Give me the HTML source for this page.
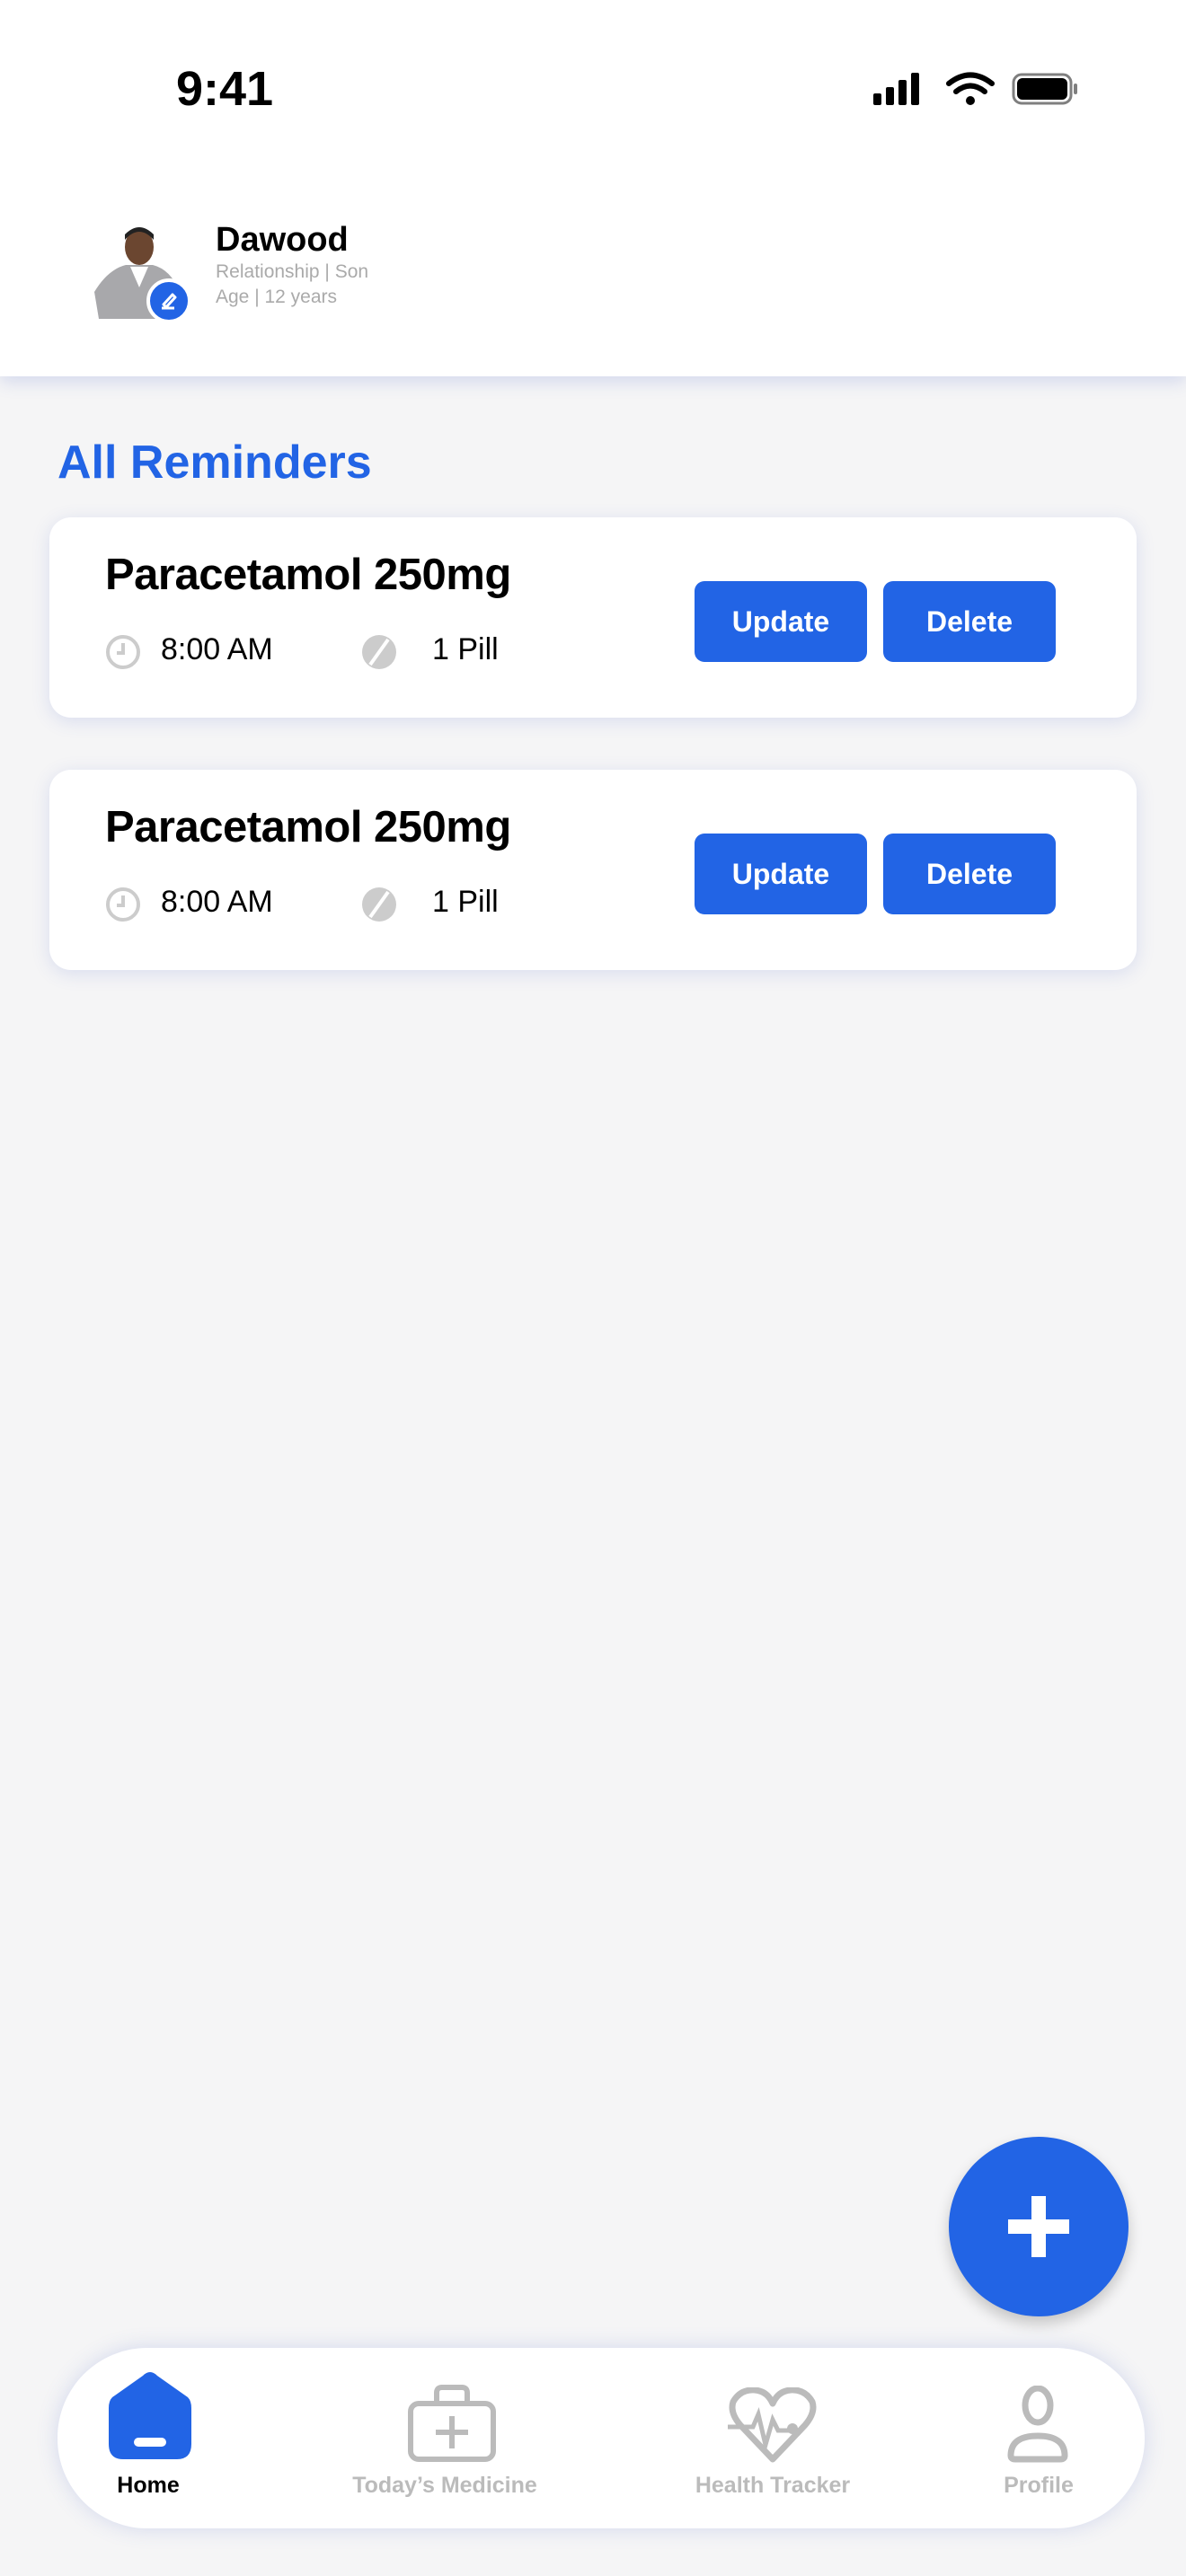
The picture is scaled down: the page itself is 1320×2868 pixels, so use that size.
<!DOCTYPE html>
<html><head><meta charset="utf-8"><style>
*{margin:0;padding:0;box-sizing:border-box}
body{width:1320px;height:2868px;background:#f5f5f6;font-family:"Liberation Sans",sans-serif;position:relative;overflow:hidden}
.abs{position:absolute}
.header{left:0;top:0;width:1320px;height:419px;background:#fff;box-shadow:0 6px 18px rgba(60,90,200,0.18)}
.card{left:55px;width:1210px;height:223px;background:#fff;border-radius:24px;box-shadow:0 4px 20px rgba(60,90,200,0.15)}
.title{left:62px;top:36px;font-size:49px;font-weight:700;color:#000;letter-spacing:-0.5px}
.row{top:128px;font-size:34px;color:#000}
.btn{top:71px;width:192px;height:90px;background:#2264e5;border-radius:11px;color:#fff;font-size:32px;font-weight:700;display:flex;align-items:center;justify-content:center}
.nl{font-size:25px;font-weight:700;color:#bbb;text-align:center;width:300px}
</style></head><body>
<div class="abs header"></div>
<div class="abs" style="left:196px;top:68px;font-size:54px;font-weight:700;color:#000">9:41</div>
<svg class="abs" style="left:970px;top:78px" width="240" height="42" viewBox="0 0 240 42">
<rect x="2" y="26" width="9" height="13" rx="2" fill="#000"/><rect x="16" y="19" width="9" height="20" rx="2" fill="#000"/><rect x="30" y="11" width="9" height="28" rx="2" fill="#000"/><rect x="44" y="3" width="9" height="36" rx="2" fill="#000"/>
<path d="M86 15 Q110 -4 134 15" stroke="#000" stroke-width="6" fill="none" stroke-linecap="round"/><path d="M94 24 Q110 11 126 24" stroke="#000" stroke-width="6" fill="none" stroke-linecap="round"/><circle cx="110" cy="34" r="5" fill="#000"/>
<rect x="158" y="5" width="64" height="32" rx="9" fill="none" stroke="#000" stroke-width="3" opacity="0.5"/><rect x="162" y="9" width="56" height="24" rx="6" fill="#000"/><rect x="225" y="15" width="4" height="12" rx="2" fill="#000" opacity="0.5"/>
</svg>
<svg class="abs" style="left:100px;top:245px" width="115" height="115" viewBox="0 0 115 115">
<circle cx="55" cy="57" r="52" fill="#fff"/>
<path d="M5 80 Q20 55 40 50 L70 50 Q90 55 100 80 L100 110 L10 110 Z" fill="#a8a8ab"/>
<path d="M45 52 L55 75 L65 52 Z" fill="#fff"/>
<ellipse cx="55" cy="30" rx="16" ry="20" fill="#6b4630"/><path d="M39 22 Q55 4 71 22 L71 16 Q55 0 39 16Z" fill="#222"/>
<circle cx="88" cy="90" r="23" fill="#2264e5" stroke="#fff" stroke-width="4"/>
<path d="M80 98 L94 98 M82 94 L92 83 L95 86 L85 97 Z" stroke="#fff" stroke-width="3" fill="none" stroke-linejoin="round"/>
</svg>
<div class="abs" style="left:240px;top:246px;font-size:38px;font-weight:700">Dawood</div>
<div class="abs" style="left:240px;top:291px;font-size:21px;color:#aaa">Relationship | Son</div>
<div class="abs" style="left:240px;top:319px;font-size:21px;color:#aaa">Age | 12 years</div>
<div class="abs" style="left:64px;top:485px;font-size:52px;font-weight:700;color:#2264e5">All Reminders</div>

<div class="abs card" style="top:576px">
<div class="abs title">Paracetamol 250mg</div>
<svg class="abs" style="left:62px;top:130px" width="40" height="40" viewBox="0 0 40 40"><circle cx="20" cy="20" r="17" fill="none" stroke="#ccc" stroke-width="4"/><path d="M20 10 V21 H13" stroke="#ccc" stroke-width="4" fill="none"/></svg>
<div class="abs row" style="left:124px">8:00 AM</div>
<svg class="abs" style="left:347px;top:130px" width="40" height="40" viewBox="0 0 40 40"><circle cx="20" cy="20" r="19" fill="#ccc"/><path d="M30 6 L10 34" stroke="#fff" stroke-width="4"/></svg>
<div class="abs row" style="left:426px">1 Pill</div>
<div class="abs btn" style="left:718px">Update</div>
<div class="abs btn" style="left:928px">Delete</div>
</div>
<div class="abs card" style="top:857px">
<div class="abs title">Paracetamol 250mg</div>
<svg class="abs" style="left:62px;top:130px" width="40" height="40" viewBox="0 0 40 40"><circle cx="20" cy="20" r="17" fill="none" stroke="#ccc" stroke-width="4"/><path d="M20 10 V21 H13" stroke="#ccc" stroke-width="4" fill="none"/></svg>
<div class="abs row" style="left:124px">8:00 AM</div>
<svg class="abs" style="left:347px;top:130px" width="40" height="40" viewBox="0 0 40 40"><circle cx="20" cy="20" r="19" fill="#ccc"/><path d="M30 6 L10 34" stroke="#fff" stroke-width="4"/></svg>
<div class="abs row" style="left:426px">1 Pill</div>
<div class="abs btn" style="left:718px">Update</div>
<div class="abs btn" style="left:928px">Delete</div>
</div>

<div class="abs" style="left:1056px;top:2379px;width:200px;height:200px;border-radius:50%;background:#2264e5;box-shadow:0 8px 16px rgba(0,0,0,0.2)"></div>
<div class="abs" style="left:1122px;top:2445px;width:68px;height:68px">
<div class="abs" style="left:26px;top:0;width:16px;height:68px;background:#fff"></div>
<div class="abs" style="left:0;top:26px;width:68px;height:16px;background:#fff"></div></div>

<div class="abs" style="left:64px;top:2614px;width:1210px;height:201px;background:#fff;border-radius:100px;box-shadow:0 0 24px rgba(60,90,200,0.18)"></div>
<svg class="abs" style="left:121px;top:2641px" width="92" height="97" viewBox="0 0 92 97"><path d="M46 0 Q50 0 54 4 L88 28 Q92 32 92 40 L92 80 Q92 97 76 97 L16 97 Q0 97 0 80 L0 40 Q0 32 4 28 L38 4 Q42 0 46 0Z" fill="#2264e5"/><rect x="28" y="73" width="36" height="10" rx="5" fill="#fff"/></svg>
<div class="abs nl" style="left:15px;top:2753px;color:#000">Home</div>
<svg class="abs" style="left:453px;top:2654px" width="100" height="88" viewBox="0 0 100 88"><path d="M33 22 V10 Q33 4 39 4 H61 Q67 4 67 10 V22" stroke="#bbb" stroke-width="6" fill="none"/><rect x="4" y="22" width="92" height="62" rx="9" stroke="#bbb" stroke-width="6" fill="none"/><path d="M50 36 V72 M32 54 H68" stroke="#bbb" stroke-width="6"/></svg>
<div class="abs nl" style="left:345px;top:2753px">Today’s Medicine</div>
<svg class="abs" style="left:810px;top:2658px" width="100" height="84" viewBox="0 0 100 84"><path d="M50 80 L14 42 Q2 28 6 16 Q14 2 30 3 Q44 4 50 18 Q56 4 70 3 Q86 2 94 16 Q98 28 86 42 Z" stroke="#bbb" stroke-width="7" fill="none" stroke-linejoin="round"/><path d="M0 44 H28 L34 30 L42 64 L50 36 L56 48 H70" stroke="#bbb" stroke-width="5" fill="none"/><circle cx="72" cy="46" r="6" fill="#bbb"/></svg>
<div class="abs nl" style="left:710px;top:2753px">Health Tracker</div>
<svg class="abs" style="left:1120px;top:2656px" width="70" height="86" viewBox="0 0 70 86"><ellipse cx="35" cy="22" rx="14" ry="19" stroke="#bbb" stroke-width="7" fill="none"/><path d="M5 78 Q5 56 35 56 Q65 56 65 78 Q65 82 60 82 H10 Q5 82 5 78Z" stroke="#bbb" stroke-width="7" fill="none"/></svg>
<div class="abs nl" style="left:1006px;top:2753px">Profile</div>
</body></html>
